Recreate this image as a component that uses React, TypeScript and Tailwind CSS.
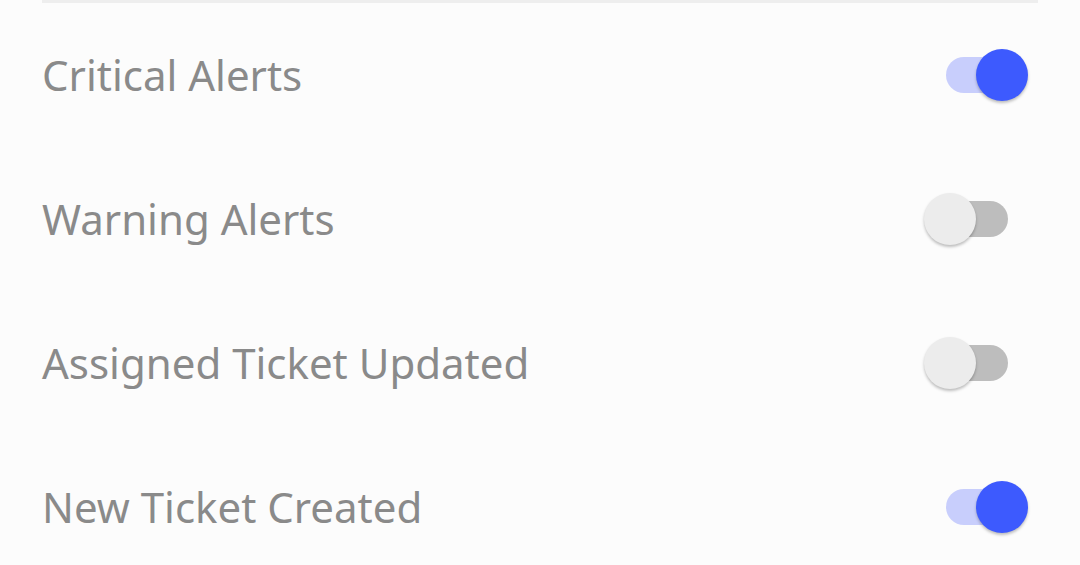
import React from "react";

function Toggle({ on }: { on: boolean }) {
  return (
    <div className="relative w-[62px] h-[36px] mr-[30px]">
      <div className={`absolute inset-0 rounded-full ${on ? "bg-[#c8cefc]" : "bg-[#bdbdbd]"}`} />
      <div
        className={`absolute top-[-8px] w-[52px] h-[52px] rounded-full shadow-[0_2px_3px_rgba(0,0,0,0.25)] ${
          on ? "left-[30px] bg-[#3d5afe]" : "left-[-22px] bg-[#ececec]"
        }`}
      />
    </div>
  );
}

const rows = [
  { label: "Critical Alerts", on: true },
  { label: "Warning Alerts", on: false },
  { label: "Assigned Ticket Updated", on: false },
  { label: "New Ticket Created", on: true },
];

export default function App() {
  return (
    <div className="w-[1080px] h-[565px] overflow-hidden bg-[#fcfcfc]" style={{ fontFamily: '"Noto Sans", sans-serif' }}>
      <div className="mx-[42px]">
        <div className="h-[3px] bg-[#eeeeee]" />
        {rows.map((r) => (
          <div key={r.label} className="h-[144px] flex items-center justify-between">
            <span className="text-[42px] text-[#8a8a8a] leading-none">{r.label}</span>
            <Toggle on={r.on} />
          </div>
        ))}
      </div>
    </div>
  );
}
